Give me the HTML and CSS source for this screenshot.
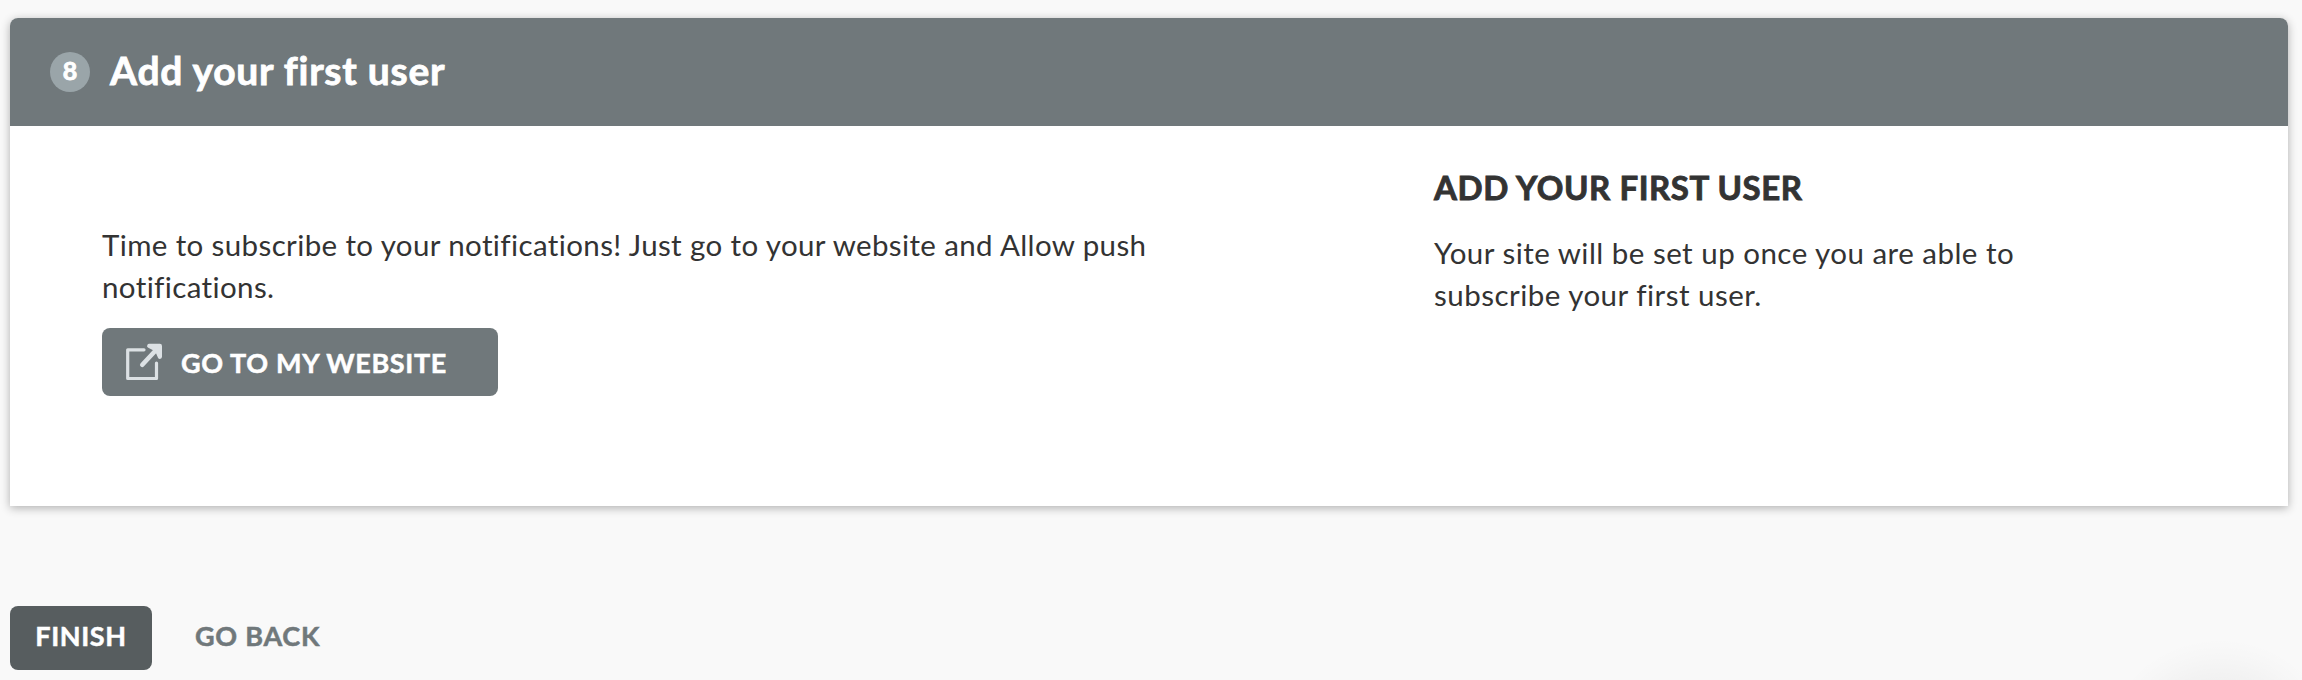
FILE: index.html
```
<!DOCTYPE html>
<html lang="en">
<head>
<meta charset="utf-8">
<title>Add your first user</title>
<link rel="stylesheet" href="styles.css">
</head>
<body>
<main class="page">
  <section class="card">
    <header class="card-header">
      <span class="step">8</span>
      <h1 class="card-title">Add your first user</h1>
    </header>
    <div class="card-body">
      <div class="action">
        <p class="text">Time to subscribe to your notifications! Just go to your website and Allow push notifications.</p>
        <a class="btn-site" href="#">
          <svg class="btn-icon" viewBox="0 0 38 38" width="38" height="38" fill="none" stroke="#dce1e4" stroke-linecap="round" stroke-linejoin="round">
            <path d="M18 6.800H1.700V35.500H30.500V20" stroke-width="3.2"/>
            <path d="M16.300 21.700L31 6" stroke-width="4.6"/>
            <path d="M23.200 2.900H33.900V13.800L31.500 8.500 28.500 5.500z" fill="#dce1e4" stroke-width="4.2"/>
          </svg>
          <span>GO TO MY WEBSITE</span>
        </a>
      </div>
      <aside class="help">
        <h2 class="help-title">ADD YOUR FIRST USER</h2>
        <p class="text help-text">Your site will be set up once you are able to subscribe your first user.</p>
      </aside>
    </div>
  </section>
  <footer class="actions">
    <button class="btn-finish" type="button">FINISH</button>
    <a class="btn-back" href="#">GO BACK</a>
  </footer>
</main>
<div class="launcher-glow"></div>
</body>
</html>
```
FILE: styles.css
```
* {
  box-sizing: border-box;
}

body {
  margin: 0;
  height: 680px;
  overflow: hidden;
  background: #f9f9f9;
  color: #333;
  font-family: Lato, "Open Sans", sans-serif;
}

h1, h2, p {
  margin: 0;
}

.page {
  padding: 18px 14px 0 10px;
}

.card {
  height: 488px;
  background: #fff;
  border-radius: 8px 8px 0 0;
  box-shadow: 0 2px 10px rgba(0, 0, 0, 0.3);
}

.card-header {
  display: flex;
  align-items: center;
  gap: 20px;
  height: 108px;
  padding-left: 40px;
  background: #70787b;
  border-radius: 8px 8px 0 0;
  color: #fff;
}

.step {
  width: 40px;
  height: 40px;
  padding-bottom: 4px;
  border-radius: 50%;
  background: #9aa5a9;
  font-size: 25px;
  font-weight: 700;
  line-height: 36px;
  text-align: center;
  -webkit-text-stroke: 0.9px currentColor;
}

.card-title {
  padding-bottom: 5px;
  font-size: 39px;
  font-weight: 700;
  line-height: 46px;
  letter-spacing: 0.75px;
  -webkit-text-stroke: 0.8px currentColor;
}

.card-body {
  display: grid;
  grid-template-columns: 1332px 1fr;
  padding: 41px 0 0 92px;
}

.action {
  width: 1080px;
  padding-top: 57px;
}

.text {
  font-size: 29.5px;
  line-height: 42px;
  letter-spacing: 0.38px;
}

.btn-site {
  display: flex;
  align-items: center;
  gap: 17px;
  width: 396px;
  height: 68px;
  margin-top: 20px;
  padding-left: 24px;
  border-radius: 8px;
  background: #70787b;
  color: #fff;
  font-size: 27px;
  font-weight: 700;
  letter-spacing: 0.65px;
  text-decoration: none;
  -webkit-text-stroke: 0.5px currentColor;
}

.btn-icon {
  flex: none;
}

.help {
  width: 620px;
}

.help-title {
  font-size: 33px;
  font-weight: 700;
  line-height: 40px;
  letter-spacing: 0.58px;
  -webkit-text-stroke: 0.9px currentColor;
}

.help-text {
  padding-top: 25px;
  letter-spacing: 0.48px;
}

.actions {
  display: flex;
  align-items: center;
  gap: 43px;
  margin-top: 100px;
  font-size: 27px;
  font-weight: 700;
  -webkit-text-stroke: 0.5px currentColor;
}

.btn-finish {
  width: 142px;
  height: 64px;
  padding: 0 0 5px;
  border: 0;
  border-radius: 8px;
  background: #575d5f;
  color: #fff;
  font: inherit;
  letter-spacing: 0.6px;
  -webkit-text-stroke: 0.5px #fff;
}

.btn-back {
  padding-bottom: 5px;
  color: #70787b;
  letter-spacing: 0.75px;
  text-decoration: none;
  -webkit-text-stroke: 0.5px #70787b;
}

.launcher-glow {
  position: absolute;
  right: 0;
  bottom: 0;
  width: 210px;
  height: 42px;
  background: radial-gradient(circle at 128px 123px, rgba(0, 0, 0, 0.035) 78px, rgba(0, 0, 0, 0.01) 105px, transparent 123px);
}
```
